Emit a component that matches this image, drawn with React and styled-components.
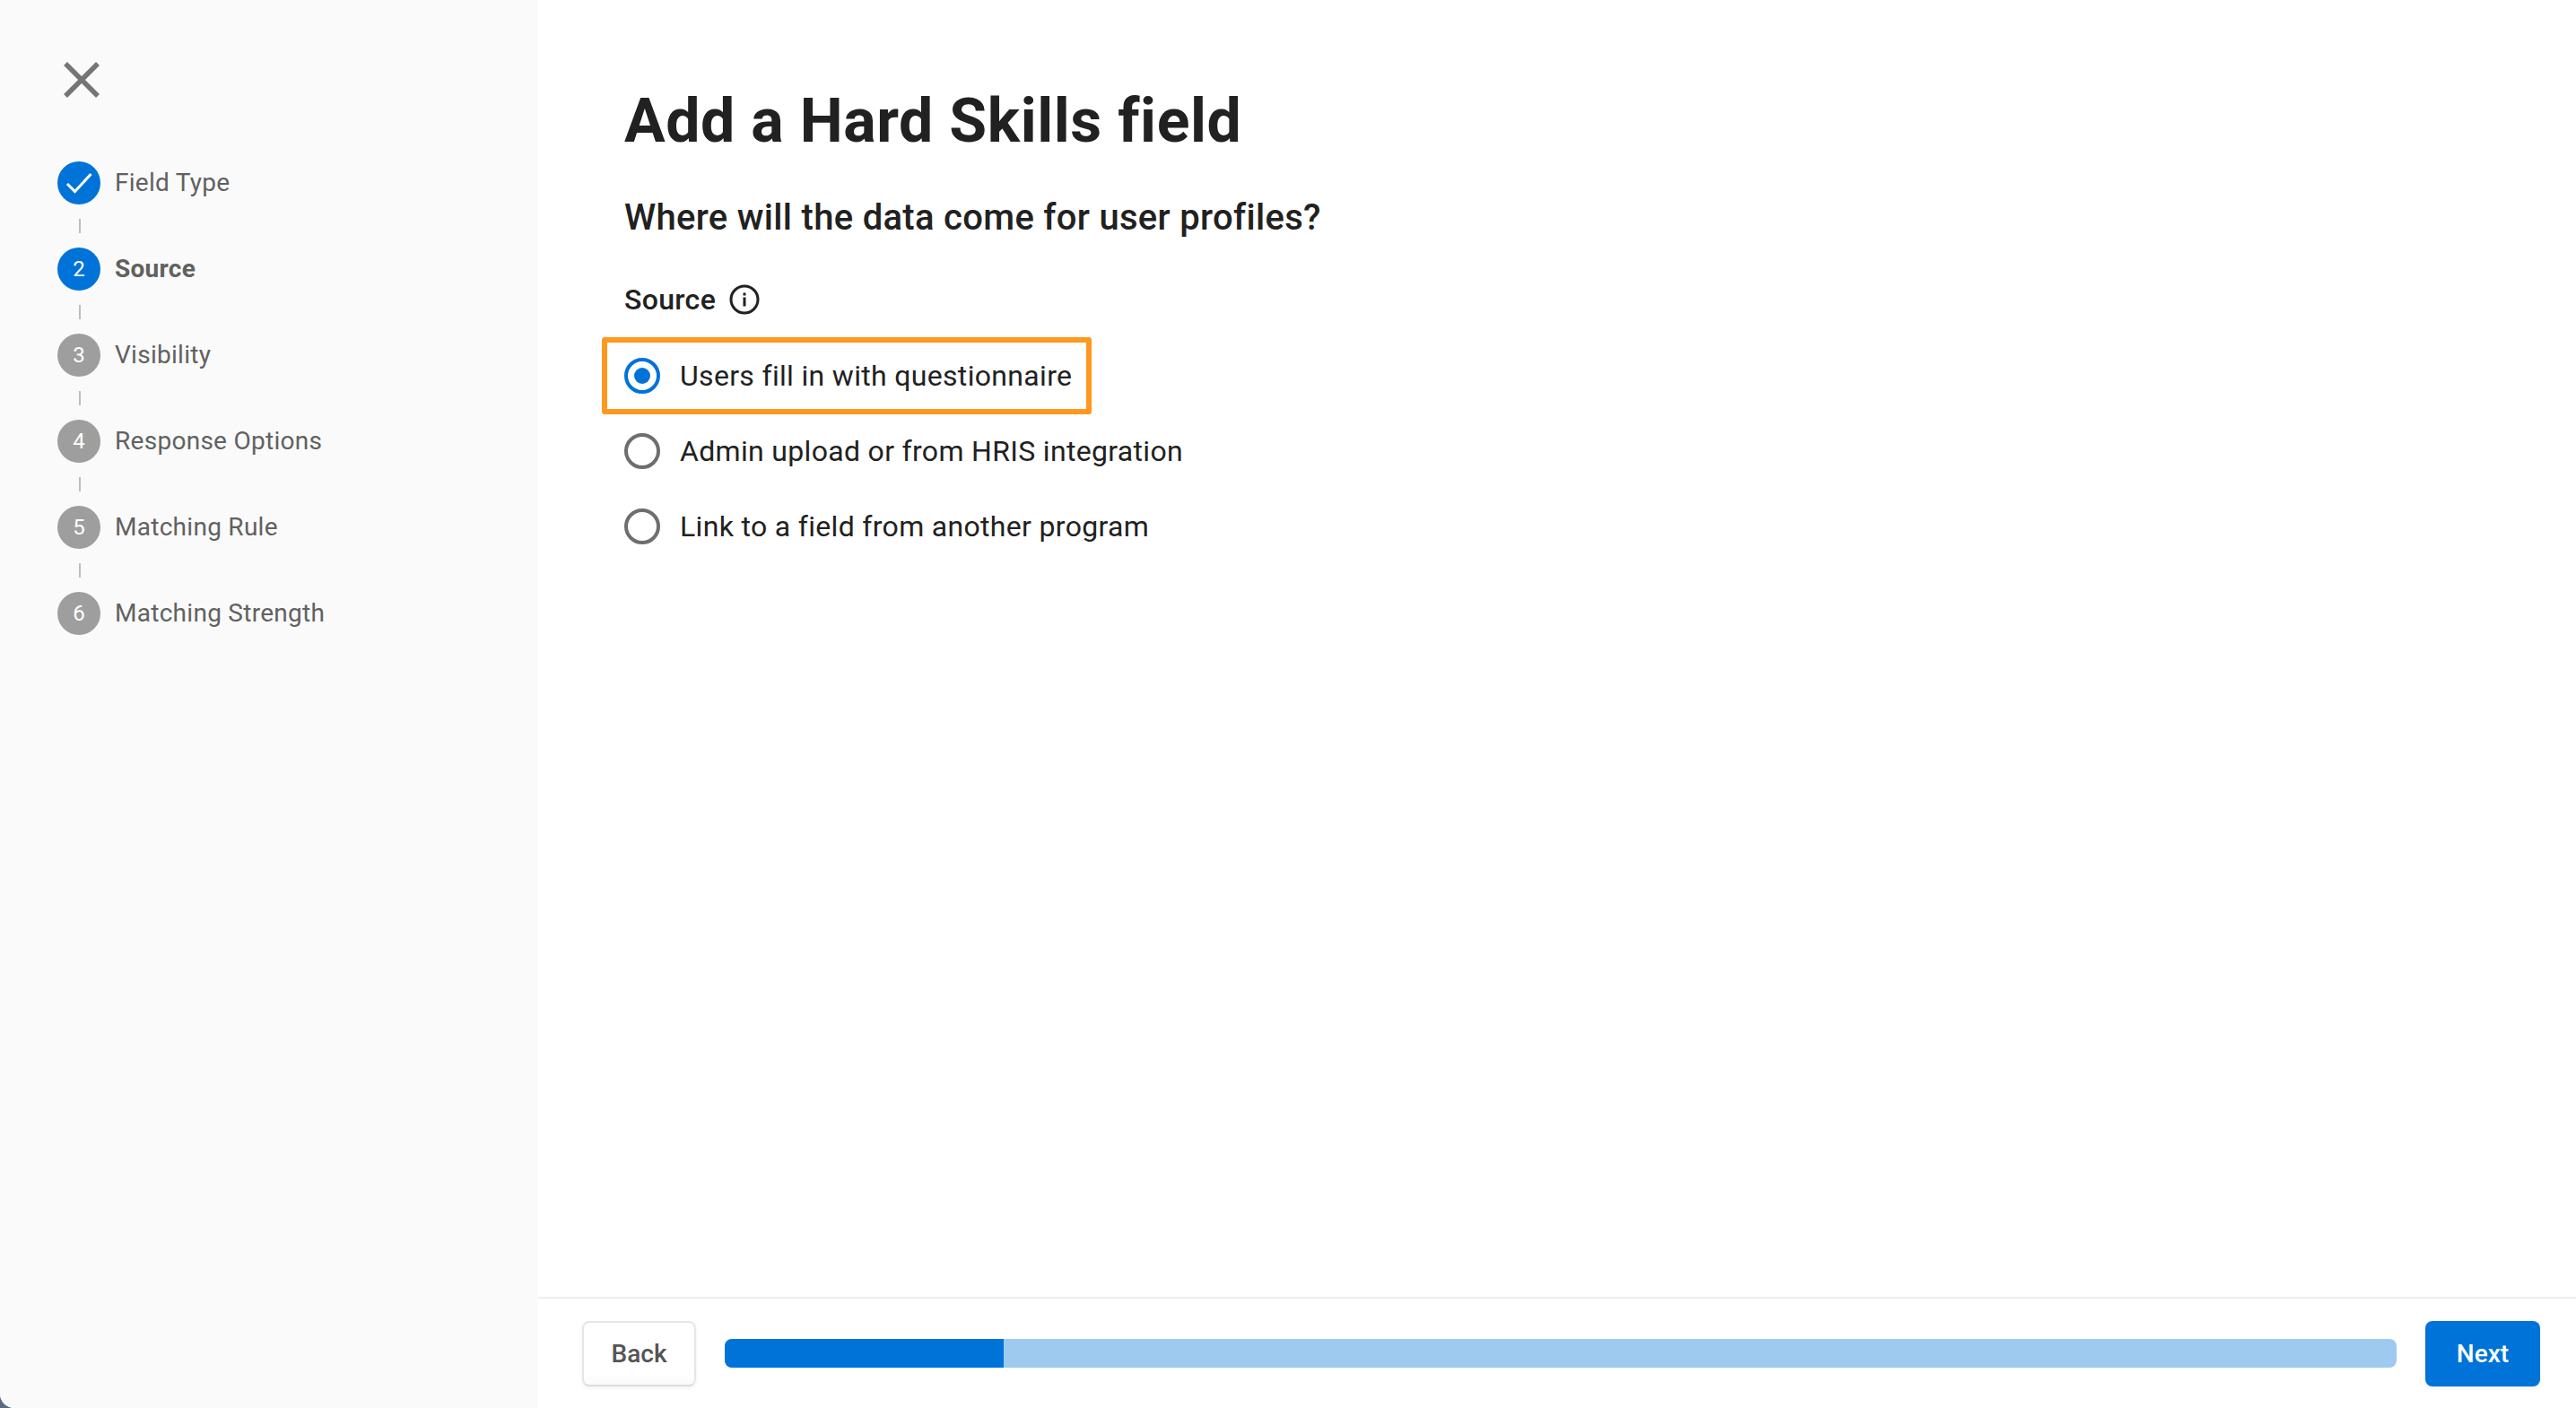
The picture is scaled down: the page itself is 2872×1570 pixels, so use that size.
import React from "react";
import styled, { createGlobalStyle } from "styled-components";

const steps = [
  { label: "Field Type", state: "done" },
  { label: "Source", state: "active" },
  { label: "Visibility" },
  { label: "Response Options" },
  { label: "Matching Rule" },
  { label: "Matching Strength" },
];

const sources = [
  { label: "Users fill in with questionnaire", selected: true },
  { label: "Admin upload or from HRIS integration" },
  { label: "Link to a field from another program" },
];

const App = () => {
  return (
    <Page>
      <GlobalStyle />
      <Sidebar>
        <CloseButton aria-label="Close">
          <svg width="40" height="40" viewBox="0 0 40 40" fill="none">
            <path d="M2 2 L38 38 M38 2 L2 38" stroke="#757575" strokeWidth="5.5" />
          </svg>
        </CloseButton>
        <StepList>
          {steps.map((step, i) => (
            <React.Fragment key={step.label}>
              {i > 0 && <Connector />}
              <Step>
                <StepCircle $blue={step.state === "done" || step.state === "active"}>
                  {step.state === "done" ? (
                    <svg width="32" height="32" viewBox="0 0 32 32" fill="none">
                      <path d="M3 17 L11.5 25.5 L29.5 6" stroke="#fff" strokeWidth="3" />
                    </svg>
                  ) : (
                    i + 1
                  )}
                </StepCircle>
                <StepLabel $active={step.state === "active"}>{step.label}</StepLabel>
              </Step>
            </React.Fragment>
          ))}
        </StepList>
      </Sidebar>
      <Main>
        <Content>
          <Title>Add a Hard Skills field</Title>
          <Question>Where will the data come for user profiles?</Question>
          <FieldLabel>
            Source
            <svg width="34" height="34" viewBox="0 0 34 34" fill="none">
              <circle cx="17" cy="17" r="15" stroke="#212121" strokeWidth="3" />
              <rect x="15.5" y="14.5" width="3" height="10" fill="#212121" />
              <rect x="15.5" y="9.5" width="3" height="3" fill="#212121" />
            </svg>
          </FieldLabel>
          <Options>
            {sources.map((source) => (
              <Option key={source.label} $highlight={source.selected}>
                <Radio $selected={source.selected} />
                {source.label}
              </Option>
            ))}
          </Options>
        </Content>
        <Footer>
          <BackButton>Back</BackButton>
          <Progress>
            <ProgressFill style={{ width: `${(2 / 12) * 100}%` }} />
          </Progress>
          <NextButton>Next</NextButton>
        </Footer>
      </Main>
    </Page>
  );
};

export default App;

const GlobalStyle = createGlobalStyle`
  html, body {
    margin: 0;
    padding: 0;
    background: #5b6b80;
  }
  * {
    box-sizing: border-box;
  }
`;

const Page = styled.div`
  display: flex;
  width: 2872px;
  height: 1570px;
  font-family: Roboto, "Liberation Sans", sans-serif;
  background: #ffffff;
  border-bottom-left-radius: 16px;
  overflow: hidden;
`;

const Sidebar = styled.aside`
  width: 600px;
  flex-shrink: 0;
  background: #fafafa;
  padding: 69px 0 0 64px;
`;

const CloseButton = styled.button`
  display: block;
  width: 40px;
  height: 40px;
  margin: 0 0 71px 7px;
  padding: 0;
  border: 0;
  background: none;
`;

const StepList = styled.div`
  display: flex;
  flex-direction: column;
`;

const Step = styled.div`
  display: flex;
  align-items: center;
  gap: 16px;
  height: 48px;
`;

const StepCircle = styled.div`
  display: flex;
  align-items: center;
  justify-content: center;
  width: 48px;
  height: 48px;
  border-radius: 50%;
  background: ${(p) => (p.$blue ? "#0073d9" : "#9e9e9e")};
  color: #ffffff;
  font-size: 24px;
`;

const StepLabel = styled.span`
  padding-bottom: 2px;
  font-size: 28px;
  letter-spacing: 0.28px;
  font-weight: ${(p) => (p.$active ? 700 : 400)};
  color: #616161;
`;

const Connector = styled.div`
  width: 2px;
  height: 16px;
  margin: 16px 0 16px 24px;
  background: #bdbdbd;
`;

const Main = styled.main`
  flex: 1;
  display: flex;
  flex-direction: column;
  min-width: 0;
`;

const Content = styled.div`
  flex: 1;
  padding: 93px 0 0 96px;
`;

const Title = styled.h1`
  margin: 0;
  font-size: 68px;
  line-height: 84px;
  letter-spacing: 0.55px;
  font-weight: 700;
  color: #212121;
`;

const Question = styled.h2`
  margin: 42px 0 0;
  font-size: 40px;
  line-height: 48px;
  letter-spacing: 0.3px;
  font-weight: 500;
  color: #212121;
`;

const FieldLabel = styled.div`
  display: flex;
  align-items: center;
  gap: 15px;
  margin-top: 47px;
  height: 40px;
  font-size: 32px;
  letter-spacing: 0.32px;
  font-weight: 500;
  color: #212121;
`;

const Options = styled.div`
  display: flex;
  flex-direction: column;
  align-items: flex-start;
  margin: 22px 0 0 -25px;
`;

const Option = styled.label`
  display: flex;
  align-items: center;
  gap: 22px;
  height: 86px;
  margin-bottom: -2px;
  padding: 0 16px 0 19px;
  font-size: 32px;
  letter-spacing: 0.32px;
  color: #212121;
  border: 6px solid ${(p) => (p.$highlight ? "#ff981f" : "transparent")};
  border-radius: 3px;
`;

const Radio = styled.span`
  position: relative;
  width: 40px;
  height: 40px;
  border-radius: 50%;
  border: 4px solid ${(p) => (p.$selected ? "#0073d9" : "#6e6e6e")};
  ${(p) =>
    p.$selected &&
    `
    &::after {
      content: "";
      position: absolute;
      inset: 7px;
      border-radius: 50%;
      background: #0073d9;
    }
  `}
`;

const Footer = styled.footer`
  display: flex;
  align-items: center;
  height: 124px;
  padding: 0 40px 0 49px;
  border-top: 2px solid #eeeeee;
`;

const BackButton = styled.button`
  width: 127px;
  height: 73px;
  flex-shrink: 0;
  padding: 1px 0 0;
  border: 2px solid #e4e7eb;
  border-bottom-color: #d9dde2;
  border-radius: 8px;
  background: linear-gradient(#ffffff 80%, #fafafa);
  box-shadow: 0 2px 4px rgba(0, 0, 0, 0.06);
  color: #555555;
  font-family: inherit;
  font-size: 28px;
  font-weight: 500;
`;

const Progress = styled.div`
  flex: 1;
  height: 32px;
  margin: 0 32px;
  border-radius: 8px;
  background: #9fcaf0;
  overflow: hidden;
`;

const ProgressFill = styled.div`
  height: 100%;
  background: #0073d9;
`;

const NextButton = styled.button`
  width: 128px;
  height: 73px;
  flex-shrink: 0;
  padding: 1px 0 0;
  border: 0;
  border-radius: 8px;
  background: #0073d9;
  box-shadow: 0 2px 4px rgba(0, 0, 0, 0.06);
  color: #ffffff;
  font-family: inherit;
  font-size: 28px;
  font-weight: 500;
`;
